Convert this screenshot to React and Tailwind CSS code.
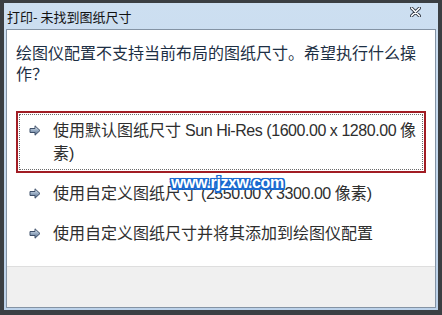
import React from 'react';

const font = "font-['Noto_Sans_CJK_SC','Noto_Sans',sans-serif]";

function LinkArrow() {
    return (
        <svg width="12" height="11" viewBox="0 0 12 11" className="shrink-0">
            <defs>
                <linearGradient id="arrowFill" x1="0" y1="0" x2="0" y2="1">
                    <stop offset="0" stopColor="#eef3f9" />
                    <stop offset="0.45" stopColor="#9fb2c8" />
                    <stop offset="1" stopColor="#4f6584" />
                </linearGradient>
            </defs>
            <polygon
                points="1,3.5 6,3.5 6,0.8 11,5.5 6,10.2 6,7.5 1,7.5"
                fill="url(#arrowFill)"
                stroke="#3f506a"
                strokeWidth="1"
                strokeLinejoin="round"
            />
        </svg>
    );
}

// latin runs are a little tighter, like Segoe UI next to the CJK face
function Latin({ children }) {
    return <span className="tracking-[-0.45px]">{children}</span>;
}

function CommandLink({ children, active }) {
    return (
        <div
            className={
                active
                    ? 'border-2 border-[#a11d24] p-px'
                    : 'border-2 border-transparent p-px'
            }
        >
            <div
                className={
                    active
                        ? 'flex items-start gap-[12px] border border-dotted border-[#6b6b6b] py-[4px] pl-[9px] pr-[2px]'
                        : 'flex items-start gap-[12px] border border-transparent py-[4px] pl-[9px] pr-[2px]'
                }
            >
                <div className="flex h-[23px] items-center">
                    <LinkArrow />
                </div>
                <p className="whitespace-nowrap font-['Liberation_Sans','Noto_Sans_CJK_SC',sans-serif] text-[16px] leading-[23px] text-[#2e2e2e]">
                    {children}
                </p>
            </div>
        </div>
    );
}

export default function App() {
    return (
        <main className={`h-[315px] w-[442px] overflow-hidden bg-[#3b3f43] pl-[4px] pt-[3px] ${font}`}>
            <div className="flex h-[307px] w-[434px] flex-col bg-gradient-to-b from-[#cddff1] to-[#bcd2ea] px-[2px] pb-[2px]">
                <div className="flex h-[26px] items-center justify-between pl-[1px] pr-[15px]">
                    <span className="text-[13px] leading-none text-[#111]">打印- 未找到图纸尺寸</span>
                    <svg width="11" height="10" viewBox="0 0 11 10" className="-mt-[8px]">
                        <path d="M1.5 1 L9.5 9 M9.5 1 L1.5 9" stroke="#2d3440" strokeWidth="3.2" strokeLinecap="round" />
                        <path d="M1.5 1 L9.5 9 M9.5 1 L1.5 9" stroke="#ffffff" strokeWidth="1.6" strokeLinecap="round" />
                    </svg>
                </div>

                <div className="relative flex flex-1 flex-col border border-[#8493a4] bg-white">
                    <div className="flex-1">
                        <p className="pl-[9px] pr-[14px] pt-[12px] text-[16px] leading-[21px] text-[#1d2f44]">
                            绘图仪配置不支持当前布局的图纸尺寸。希望执行什么操作？
                        </p>

                        <div className="mt-[27px] flex flex-col gap-px px-[9px]">
                            <CommandLink active>
                                使用默认图纸尺寸<Latin> Sun Hi-Res (1600.00 x 1280.00 </Latin>像
                                <br />
                                素)
                            </CommandLink>
                            <CommandLink>
                                使用自定义图纸尺寸<Latin> (2550.00 x 3300.00 </Latin>像素)
                            </CommandLink>
                            <CommandLink>使用自定义图纸尺寸并将其添加到绘图仪配置</CommandLink>
                        </div>
                    </div>

                    <div className="h-[41px] border-t border-[#dedede] bg-[#f0f0f0]" />

                    <span className="absolute left-[164px] top-[145px] font-['Liberation_Sans',sans-serif] text-[16px] font-bold leading-none tracking-[-0.4px] text-white [text-shadow:0_0_2px_#1a6ad0,1.5px_1.5px_0_#1a6ad0,-1.5px_-1.5px_0_#1a6ad0,1.5px_-1.5px_0_#1a6ad0,-1.5px_1.5px_0_#1a6ad0,0_1.5px_0_#1a6ad0,0_-1.5px_0_#1a6ad0,1.5px_0_0_#1a6ad0,-1.5px_0_0_#1a6ad0]">
                        www.rjzxw.com
                    </span>
                </div>
            </div>
        </main>
    );
}
